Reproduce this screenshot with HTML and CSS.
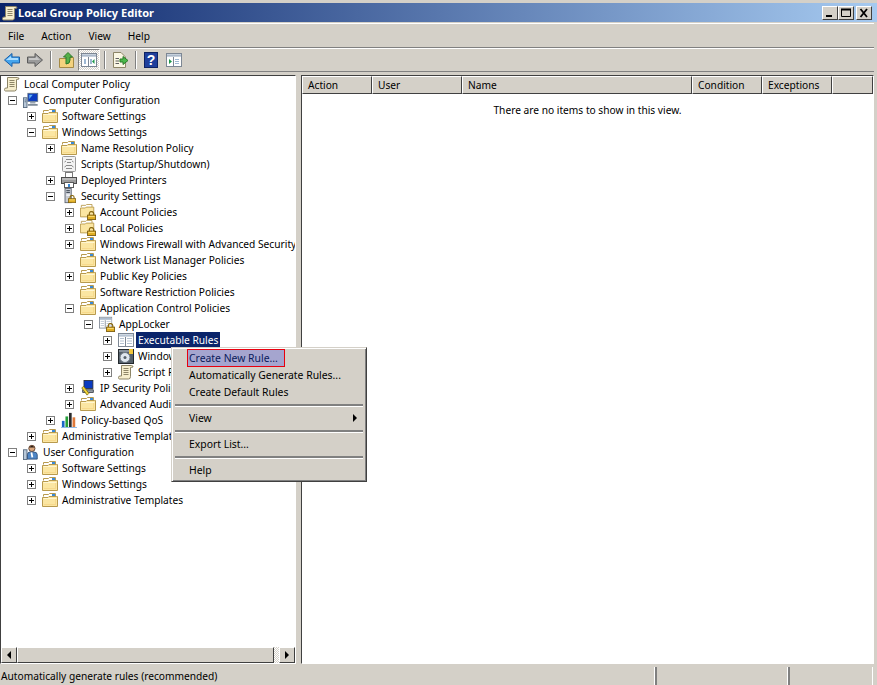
FILE: index.html
```html
<!DOCTYPE html>
<html lang="en">
<head>
<meta charset="utf-8">
<title>Local Group Policy Editor</title>
<link rel="stylesheet" href="styles.css">
</head>
<body>
<svg class="defs" width="0" height="0" aria-hidden="true">
  <symbol id="folder" viewBox="0 0 16 16">
    <path d="M1.500 4.500V2.500H6.500L7.500 1.500H13.500V4.500" fill="#fff" stroke="#b89a4e"/>
    <rect x="10" y="2" width="3" height="2" fill="#3a8ad8"/>
    <path d="M.5 5.500V14.500H15.500V4.500H14.500H7L6 5.500Z" fill="#fbe6a2" stroke="#b89a4e"/>
    <path d="M2 13H14V7H13V12H2Z" fill="#f7d98c"/>
    <path d="M1.500 6.500H14.500" stroke="#fff6d2"/>
  </symbol>
  <symbol id="lock" viewBox="0 0 10 10">
    <path d="M2.500 5V3Q2.500 .5 5 .5T7.500 3V5" fill="none" stroke="#8a6a14" stroke-width="1.400"/>
    <rect x=".5" y="4.500" width="9" height="5" fill="#e0ae24" stroke="#7d5e10"/>
    <path d="M1.500 6H8.500" stroke="#ffe07a"/>
  </symbol>
  <symbol id="lockfolder" viewBox="0 0 18 18">
    <path d="M1.500 3.500V1.500H6.500L7.500 .5H13.500V3.500" fill="#fff" stroke="#b89a4e"/>
    <path d="M.5 4.500V14.500H15.500V3.500H7L6 4.500Z" fill="#fbe6a2" stroke="#b89a4e"/>
    <use href="#lock" x="8" y="8" width="10" height="10"/>
  </symbol>
  <symbol id="scroll" viewBox="0 0 16 16">
    <path d="M3.500 1.500H13.500Q15 1.500 15 3L12.500 3.500V12.500Q12.500 15 10.500 15H1.500Q.5 15 .5 13.500Q.5 12 2 12H3.500Z" fill="#f6eecd" stroke="#8d8567"/>
    <path d="M5.500 4.500H10.500M5.500 6.500H10.500M5.500 8.500H10.500M5.500 10.500H10.500" stroke="#8d8567"/>
  </symbol>
  <symbol id="computer" viewBox="0 0 18 18">
    <rect x="5.500" y="1.500" width="11" height="9" fill="#0a3bc0" stroke="#5d6f86"/>
    <path d="M7 3H11L7 8Z" fill="#64b4f4"/>
    <rect x="8" y="11" width="6" height="2" fill="#9aa6b2"/>
    <path d="M5.500 14.500H16.500" stroke="#7f8c99" stroke-width="2"/>
    <rect x=".5" y="6.500" width="4" height="11" fill="#b8c8d8" stroke="#56697e"/>
    <path d="M2 9H3M2 11H3" stroke="#2a3d55"/>
  </symbol>
  <symbol id="user" viewBox="0 0 18 18">
    <rect x=".5" y="6.500" width="4" height="11" fill="#b8c8d8" stroke="#56697e"/>
    <circle cx="10" cy="5" r="3.500" fill="#d9a57c" stroke="#5b3d2c"/>
    <path d="M7 4Q10 0 13 4Z" fill="#2d2017"/>
    <path d="M5 17V12Q5 9 8 9H12Q16 9 16 12V17Z" fill="#4e86c6" stroke="#2e4f78"/>
    <path d="M9.500 9.500L10.500 15" stroke="#fff" stroke-width="2"/>
  </symbol>
  <symbol id="script" viewBox="0 0 16 16">
    <rect x="1.500" y=".5" width="13" height="15" rx="1" fill="#f3f3f3" stroke="#9a9a9a"/>
    <path d="M5 3.500H11M3.500 6 5 5M11 5 12.500 6M6 6.500H10M5 9.500H11M3.500 11 5 10M11 10 12.500 11M5 12.500H11" stroke="#8a8a8a" fill="none"/>
  </symbol>
  <symbol id="printer" viewBox="0 0 16 16">
    <rect x="4.500" y=".5" width="7" height="5" fill="#fff" stroke="#7a7a7a"/>
    <rect x=".5" y="5.500" width="15" height="6" fill="#9d9d9d" stroke="#4c4c4c"/>
    <path d="M1 7H15" stroke="#d8d8d8"/>
    <rect x="3.500" y="10.500" width="9" height="5" fill="#fff" stroke="#5a5a5a"/>
    <rect x="7" y="12" width="2" height="3" fill="#3a8ad8"/>
  </symbol>
  <symbol id="server" viewBox="0 0 16 18">
    <rect x="3.500" y=".5" width="7" height="16" fill="#c8ccd4" stroke="#5c6470"/>
    <path d="M5 3H9M5 5H9" stroke="#2d3744"/>
    <rect x="5" y="7" width="4" height="2" fill="#eef0f4"/>
    <use href="#lock" x="7" y="8" width="9" height="9"/>
  </symbol>
  <symbol id="window" viewBox="0 0 16 16">
    <rect x=".5" y="1.500" width="15" height="13" fill="#fff" stroke="#7d8794"/>
    <path d="M1 3H15M1 4H15" stroke="#9fb0c4"/>
    <path d="M7.500 5V14" stroke="#7d8794"/>
    <path d="M2 6.500H6M2 9H6M2 11.500H6M9 6.500H14M9 9H14M9 11.500H14" stroke="#b4c1d0"/>
  </symbol>
  <symbol id="applocker" viewBox="0 0 18 18">
    <use href="#window" x="0" y="0" width="15" height="15"/>
    <use href="#lock" x="8" y="8" width="10" height="10"/>
  </symbol>
  <symbol id="disk" viewBox="0 0 16 16">
    <rect x=".5" y="1.500" width="15" height="14" fill="#55606a" stroke="#23282d"/>
    <path d="M1 3H15" stroke="#c0c8d0"/>
    <circle cx="7" cy="9.500" r="5" fill="#dfe7ee" stroke="#6d7780"/>
    <circle cx="7" cy="9.500" r="1.500" fill="#55606a"/>
    <rect x="11" y="1" width="4" height="5" fill="#f3c63a"/>
  </symbol>
  <symbol id="ipsec" viewBox="0 0 16 18">
    <rect x="3.500" y=".5" width="10" height="9" fill="#0a3bc0" stroke="#2a3240"/>
    <path d="M2 11H14V14H2Z" fill="#9aa2aa" stroke="#3a4048"/>
    <path d="M1 9 3 7 9 15 7 17Z" fill="#f4d73a" stroke="#84721a"/>
  </symbol>
  <symbol id="chart" viewBox="0 0 18 18">
    <rect x="1" y="10" width="3" height="7" fill="#1a66c8"/>
    <rect x="5" y="5" width="3" height="12" fill="#26a03c"/>
    <rect x="9" y="1" width="3" height="16" fill="#2a2a2a"/>
    <rect x="13" y="6" width="3" height="11" fill="#e07a3a"/>
    <path d="M0 17.500H18" stroke="#7fb0e0"/>
  </symbol>
</svg>

<div class="app">
  <header class="titlebar">
    <svg class="ico"><use href="#scroll"/></svg>
    <span class="title">Local Group Policy Editor</span>
    <div class="winbtns">
      <button class="winbtn"><svg viewBox="0 0 12 10"><rect x="2" y="7" width="6" height="2" fill="#000"/></svg></button>
      <button class="winbtn"><svg viewBox="0 0 12 10"><path d="M1.500 1.500H10.500V8.500H1.500Z" fill="none" stroke="#000"/><path d="M1 1.500H11" stroke="#000" stroke-width="2"/></svg></button>
      <button class="winbtn close"><svg viewBox="0 0 12 10"><path d="M2.500 1 9 9M9 1 2.500 9" stroke="#000" stroke-width="1.800"/></svg></button>
    </div>
  </header>

  <nav class="menubar">
    <span class="mi">File</span><span class="mi">Action</span><span class="mi">View</span><span class="mi">Help</span>
  </nav>

  <div class="toolbar">
    <svg class="tb" viewBox="0 0 16 16"><path d="M8 1.500 .5 8 8 14.500V11H15.500V5H8Z" fill="#45a4ec" stroke="#1b5fa8"/><path d="M7 4 2 8H14V6H7Z" fill="#a9dcff"/></svg>
    <svg class="tb" viewBox="0 0 16 16"><path d="M8 1.500 15.500 8 8 14.500V11H.5V5H8Z" fill="#9a9a9a" stroke="#5b5b5b"/><path d="M2 6H9V4L13 8H2Z" fill="#c6c6c6"/></svg>
    <span class="tsep"></span>
    <svg class="tb up" viewBox="0 0 16 16"><path d="M.5 6.500H7L8 5.500H14.500V15.500H.5Z" fill="#f4d27e" stroke="#a58a45"/><path d="M7 12V5H4.500L9 .5 13.500 5H11V8Q11 12 7 12Z" fill="#55b04a" stroke="#2c7a2a"/></svg>
    <span class="pressed"><svg class="tbw" viewBox="0 0 16 16"><rect x=".5" y="1.500" width="15" height="13" fill="#fff" stroke="#7d8794"/><path d="M1 3H15M1 4H15" stroke="#8fa2b8"/><path d="M7.500 5V14" stroke="#7d8794"/><path d="M3 7H5V12H3ZM9 7H11V12H9Z" fill="#9fb8d2"/><path d="M13.500 7 11 9.500 13.500 12Z" fill="#1f9a4a"/></svg></span>
    <span class="tsep s2"></span>
    <svg class="tb ex" viewBox="0 0 16 16"><path d="M1.500 .5H9L13.500 5V15.500H1.500Z" fill="#fbf7e4" stroke="#8d8567"/><path d="M3.500 6.500H7M3.500 9H7M3.500 11.500H7" stroke="#5f5f5f"/><path d="M8 7H11V4.500L16 8.500 11 12.500V10H8Z" fill="#4ab84a" stroke="#2c7a2a"/></svg>
    <span class="tsep s3"></span>
    <svg class="tb help" viewBox="0 0 14 16"><rect x=".5" y=".5" width="13" height="15" fill="#1f3f9c" stroke="#0d2263"/><text x="7" y="13" class="q">?</text></svg>
    <svg class="tb pane" viewBox="0 0 16 16"><rect x=".5" y="1.500" width="15" height="13" fill="#fff" stroke="#7d8794"/><path d="M1 3H15M1 4H15" stroke="#8fa2b8"/><path d="M7.500 5V14" stroke="#7d8794"/><path d="M9 7H13V8H9ZM9 9H13V10H9ZM9 11H13V12H9Z" fill="#9fb8d2"/><path d="M3 7 6 9.500 3 12Z" fill="#1f9a4a"/></svg>
  </div>

  <main class="panes">
    <section class="treepane">
      <div class="tree">
        <div class="row root"><svg class="ico"><use href="#scroll"/></svg><span class="label">Local Computer Policy</span></div>
        <div class="row l0"><span class="exp minus"></span><svg class="ico"><use href="#computer"/></svg><span class="label">Computer Configuration</span></div>
        <div class="row l1"><span class="exp plus"></span><svg class="ico"><use href="#folder"/></svg><span class="label">Software Settings</span></div>
        <div class="row l1"><span class="exp minus"></span><svg class="ico"><use href="#folder"/></svg><span class="label">Windows Settings</span></div>
        <div class="row l2"><span class="exp plus"></span><svg class="ico"><use href="#folder"/></svg><span class="label">Name Resolution Policy</span></div>
        <div class="row l2"><span class="noexp"></span><svg class="ico"><use href="#script"/></svg><span class="label">Scripts (Startup/Shutdown)</span></div>
        <div class="row l2"><span class="exp plus"></span><svg class="ico"><use href="#printer"/></svg><span class="label">Deployed Printers</span></div>
        <div class="row l2"><span class="exp minus"></span><svg class="ico"><use href="#server"/></svg><span class="label">Security Settings</span></div>
        <div class="row l3"><span class="exp plus"></span><svg class="ico"><use href="#lockfolder"/></svg><span class="label">Account Policies</span></div>
        <div class="row l3"><span class="exp plus"></span><svg class="ico"><use href="#lockfolder"/></svg><span class="label">Local Policies</span></div>
        <div class="row l3"><span class="exp plus"></span><svg class="ico"><use href="#folder"/></svg><span class="label">Windows Firewall with Advanced Security</span></div>
        <div class="row l3"><span class="noexp"></span><svg class="ico"><use href="#folder"/></svg><span class="label">Network List Manager Policies</span></div>
        <div class="row l3"><span class="exp plus"></span><svg class="ico"><use href="#folder"/></svg><span class="label">Public Key Policies</span></div>
        <div class="row l3"><span class="noexp"></span><svg class="ico"><use href="#folder"/></svg><span class="label">Software Restriction Policies</span></div>
        <div class="row l3"><span class="exp minus"></span><svg class="ico"><use href="#folder"/></svg><span class="label">Application Control Policies</span></div>
        <div class="row l4"><span class="exp minus"></span><svg class="ico"><use href="#applocker"/></svg><span class="label">AppLocker</span></div>
        <div class="row l5"><span class="exp plus"></span><svg class="ico"><use href="#window"/></svg><span class="label selected">Executable Rules</span></div>
        <div class="row l5"><span class="exp plus"></span><svg class="ico"><use href="#disk"/></svg><span class="label">Windows Installer Rules</span></div>
        <div class="row l5"><span class="exp plus"></span><svg class="ico"><use href="#scroll"/></svg><span class="label">Script Rules</span></div>
        <div class="row l3"><span class="exp plus"></span><svg class="ico"><use href="#ipsec"/></svg><span class="label">IP Security Policies</span></div>
        <div class="row l3"><span class="exp plus"></span><svg class="ico"><use href="#folder"/></svg><span class="label">Advanced Audit Policy</span></div>
        <div class="row l2"><span class="exp plus"></span><svg class="ico"><use href="#chart"/></svg><span class="label">Policy-based QoS</span></div>
        <div class="row l1"><span class="exp plus"></span><svg class="ico"><use href="#folder"/></svg><span class="label">Administrative Templates</span></div>
        <div class="row l0"><span class="exp minus"></span><svg class="ico"><use href="#user"/></svg><span class="label">User Configuration</span></div>
        <div class="row l1"><span class="exp plus"></span><svg class="ico"><use href="#folder"/></svg><span class="label">Software Settings</span></div>
        <div class="row l1"><span class="exp plus"></span><svg class="ico"><use href="#folder"/></svg><span class="label">Windows Settings</span></div>
        <div class="row l1"><span class="exp plus"></span><svg class="ico"><use href="#folder"/></svg><span class="label">Administrative Templates</span></div>
      </div>
      <div class="hscroll">
        <span class="sbtn"><i class="arrow left"></i></span>
        <span class="thumb"></span>
        <span class="track"></span>
        <span class="sbtn"><i class="arrow right"></i></span>
      </div>
    </section>

    <section class="listpane">
      <div class="thead">
        <span class="th c1">Action</span>
        <span class="th c2">User</span>
        <span class="th c3">Name</span>
        <span class="th c4">Condition</span>
        <span class="th c5">Exceptions</span>
        <span class="th c6"></span>
      </div>
      <p class="empty">There are no items to show in this view.</p>
    </section>
  </main>

  <footer class="status">
    <span class="sp main">Automatically generate rules (recommended)</span>
    <span class="sp mid"></span>
    <span class="sp end"></span>
  </footer>

  <div class="ctx">
    <div class="ci hot">Create New Rule...</div>
    <div class="ci">Automatically Generate Rules...</div>
    <div class="ci">Create Default Rules</div>
    <div class="csep"></div>
    <div class="ci sub">View<i class="arrow right"></i></div>
    <div class="csep"></div>
    <div class="ci">Export List...</div>
    <div class="csep"></div>
    <div class="ci">Help</div>
  </div>
</div>
</body>
</html>
```

FILE: styles.css
```css
* { box-sizing: border-box; }
html, body { margin: 0; height: 100%; }
body {
  font-family: "Noto Sans", "Liberation Sans", sans-serif;
  font-size: 10.2px;
  color: #000;
  background: #d4d0c8;
  overflow: hidden;
}
.defs { position: absolute; }
.app { position: relative; width: 877px; height: 685px; display: flex; flex-direction: column; background: #d4d0c8; }

.titlebar {
  height: 19px;
  margin-top: 3px;
  display: flex;
  align-items: center;
  padding-left: 2px;
  background: linear-gradient(90deg, #0a246a, #a6caf0);
  color: #fff;
}
.titlebar .ico { width: 16px; height: 16px; flex: none; }
.title { font-weight: 700; font-size: 11px; }
.winbtns { margin-left: auto; display: flex; margin-right: 5px; gap: 0; }
.winbtn {
  width: 16px; height: 14px; padding: 0;
  background: #d4d0c8;
  border: 1px solid;
  border-color: #fff #404040 #404040 #fff;
  display: flex; align-items: center; justify-content: center;
}
.winbtn svg { width: 12px; height: 10px; display: block; }
.winbtn.close { margin-left: 2px; }

.menubar {
  height: 25px;
  margin-top: 1px;
  margin-right: 3px;
  display: flex;
  align-items: center;
  gap: 17px;
  padding-left: 8px;
  border-top: 1px solid #fff;
  border-bottom: 1px solid #808080;
}

.toolbar {
  height: 24px;
  margin-right: 3px;
  display: flex;
  align-items: center;
  padding-left: 4px;
  border-top: 1px solid #fff;
  border-bottom: 1px solid #808080;
}
.tb { width: 16px; height: 16px; flex: none; margin-right: 7px; }
.tsep { width: 2px; height: 18px; background: #808080; border-right: 1px solid #fff; flex: none; margin-right: 7px; }
.tsep.s2 { margin-left: 4px; margin-right: 6px; }
.tb.up { margin-right: 3px; }
.pressed {
  width: 22px; height: 22px; flex: none;
  display: flex; align-items: center; justify-content: center;
  border: 1px solid; border-color: #808080 #fff #fff #808080;
  background: repeating-conic-gradient(#fff 0 25%, #d4d0c8 0 50%) 0 0 / 2px 2px;
}
.tbw { width: 16px; height: 16px; }
.tb.help { width: 14px; margin-right: 8px; }
.q { font: 700 14px "Liberation Sans", sans-serif; fill: #fff; text-anchor: middle; }

.panes { flex: 1; min-height: 0; display: flex; padding-top: 3px; padding-bottom: 3px; padding-right: 3px; }

.treepane {
  width: 296px;
  flex: none;
  display: flex;
  flex-direction: column;
  border: 1px solid;
  border-color: #404040 #fff #fff #404040;
  background: #fff;
  margin-right: 5px;
}
.tree { flex: 1; min-height: 0; overflow: hidden; }
.row { height: 16px; display: flex; align-items: center; white-space: nowrap; }
.root { padding-left: 3px; }
.l0 { padding-left: 7px; }
.l1 { padding-left: 26px; }
.l2 { padding-left: 45px; }
.l3 { padding-left: 64px; }
.l4 { padding-left: 83px; }
.l5 { padding-left: 102px; }
.exp {
  width: 9px; height: 9px; flex: none;
  margin-right: 6px;
  border: 1px solid #808080;
  background: #fff;
  position: relative;
}
.exp::before { content: ""; position: absolute; left: 1px; top: 3px; width: 5px; height: 1px; background: #000; }
.exp.plus::after { content: ""; position: absolute; left: 3px; top: 1px; width: 1px; height: 5px; background: #000; }
.noexp { width: 15px; flex: none; }
.ico { width: 16px; height: 16px; flex: none; }
.label { margin-left: 2px; padding: 0 2px; height: 16px; line-height: 17px; }
.selected { background: #0a246a; color: #fff; }

.hscroll { height: 16px; flex: none; display: flex; }
.sbtn {
  width: 16px; flex: none; background: #d4d0c8;
  border: 1px solid; border-color: #fff #404040 #404040 #fff;
  display: flex; align-items: center; justify-content: center;
}
.arrow { width: 0; height: 0; display: block; border: 4px solid transparent; }
.arrow.left { border-left-width: 0; border-right-color: #000; }
.arrow.right { border-right-width: 0; border-left-color: #000; }
.thumb {
  width: 257px; flex: none; background: #d4d0c8;
  border: 1px solid; border-color: #fff #404040 #404040 #fff;
}
.track { flex: 1; background: repeating-conic-gradient(#fff 0 25%, #d4d0c8 0 50%) 0 0 / 2px 2px; }

.listpane {
  flex: 1; min-width: 0;
  background: #fff;
  border: 1px solid;
  border-color: #404040 #fff #fff #404040;
  display: flex; flex-direction: column;
}
.thead { height: 18px; display: flex; flex: none; }
.th {
  background: #d4d0c8;
  padding-left: 5px;
  line-height: 17px;
  border: 1px solid;
  border-color: #fff #404040 #404040 #fff;
}
.c1 { width: 70px; }
.c2 { width: 90px; }
.c3 { width: 230px; }
.c4 { width: 70px; }
.c5 { width: 70px; }
.c6 { flex: 1; }
.empty { margin: 9px 0 0; text-align: center; }

.status { height: 18px; flex: none; display: flex; margin-right: 4px; }
.sp { line-height: 18px; border-right: 1px solid #fff; padding-left: 1px; }
.sp.main { width: 655px; }
.sp.mid { width: 133px; border-left: 2px solid #808080; }
.sp.end { flex: 1; border-left: 2px solid #808080; }

.ctx {
  position: absolute;
  left: 171px; top: 347px;
  width: 196px; height: 135px;
  font-size: 10.4px;
  background: #d4d0c8;
  border: 1px solid;
  border-color: #d4d0c8 #404040 #404040 #d4d0c8;
  box-shadow: inset 1px 1px 0 #fff, inset -1px -1px 0 #808080;
  padding: 2px 3px;
}
.ci { height: 17px; line-height: 16px; padding-left: 14px; }
.ci.hot {
  margin-left: 13px; margin-bottom: 1px;
  width: 96px; height: 16px;
  padding-left: 1px;
  line-height: 17px;
  background: #a5a5cf;
  outline: 1px solid #e8000e;
  color: #0a1a5a;
}
.ci.sub { display: flex; justify-content: space-between; align-items: center; padding-right: 6px; padding-bottom: 2px; }
.csep { height: 9px; display: flex; align-items: center; }
.csep::before { content: ""; display: block; width: 100%; height: 2px; background: #808080; border-bottom: 1px solid #fff; }
```
